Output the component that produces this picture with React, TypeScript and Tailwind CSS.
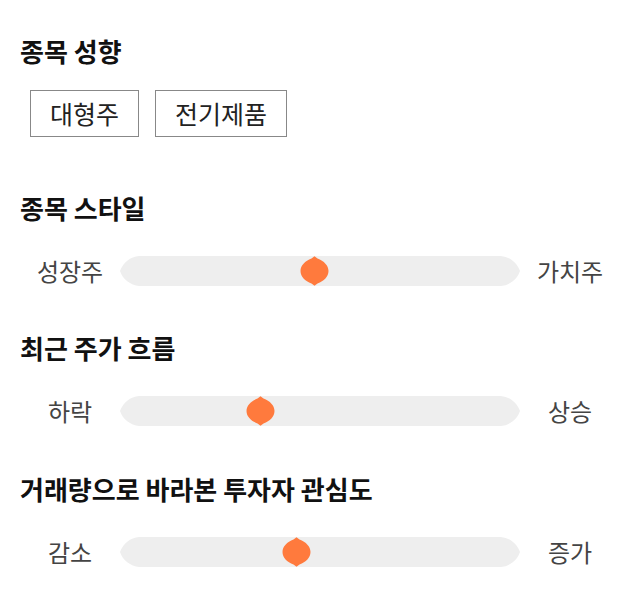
const font = { fontFamily: '"Noto Sans CJK KR", "Noto Sans", sans-serif' }

const tags = ['대형주', '전기제품']

const sliders = [
  { title: '종목 스타일', left: '성장주', right: '가치주', value: 0.485, gap: 'mt-[53px]' },
  { title: '최근 주가 흐름', left: '하락', right: '상승', value: 0.339, gap: 'mt-[44px]' },
  { title: '거래량으로 바라본 투자자 관심도', left: '감소', right: '증가', value: 0.438, gap: 'mt-[45px]' },
]

function Track() {
  return (
    <svg className="absolute inset-0" width="100%" height="30" viewBox="0 0 398 30" preserveAspectRatio="none">
      <path
        d="M19 0 H379 A22 22 0 0 1 398 15 A22 22 0 0 1 379 30 H19 A22 22 0 0 1 0 15 A22 22 0 0 1 19 0 Z"
        fill="#eeeeee"
      />
    </svg>
  )
}

function Thumb({ value }: { value: number }) {
  return (
    <svg
      className="absolute top-0"
      style={{ left: `calc((100% - 29px) * ${value})` }}
      width="29"
      height="30"
      viewBox="0 0 29 30"
    >
      <path
        d="M14.5 0.3 L17.5 2.5 C24 5 28.5 9.5 28.5 15 C28.5 20.5 24 25 17.5 27.5 L14.5 29.7 L11.5 27.5 C5 25 0.5 20.5 0.5 15 C0.5 9.5 5 5 11.5 2.5 Z"
        fill="#ff7a3d"
      />
    </svg>
  )
}

export default function App() {
  return (
    <div className="w-[640px] h-[606px] bg-white px-5 pt-[33px]" style={font}>
      {/* 종목 성향 */}
      <h2 className="text-[26px] leading-[36px] font-bold text-[#111]">종목 성향</h2>
      <div className="mt-[21px] ml-[10px] flex gap-4">
        {tags.map((t) => (
          <span
            key={t}
            className="h-[47px] px-[19px] flex items-center border border-[#888] text-[25px] text-[#222]"
          >
            {t}
          </span>
        ))}
      </div>

      {sliders.map((s) => (
        <div key={s.title} className={s.gap}>
          <h2 className="text-[26px] leading-[36px] font-bold text-[#111]">{s.title}</h2>
          <div className="mt-[30px] flex items-center h-[30px]">
            <span className="w-[100px] text-center text-[24px] text-[#444]">{s.left}</span>
            <div className="relative flex-1 h-[30px]">
              <Track />
              <Thumb value={s.value} />
            </div>
            <span className="w-[100px] text-center text-[24px] text-[#444]">{s.right}</span>
          </div>
        </div>
      ))}
    </div>
  )
}
